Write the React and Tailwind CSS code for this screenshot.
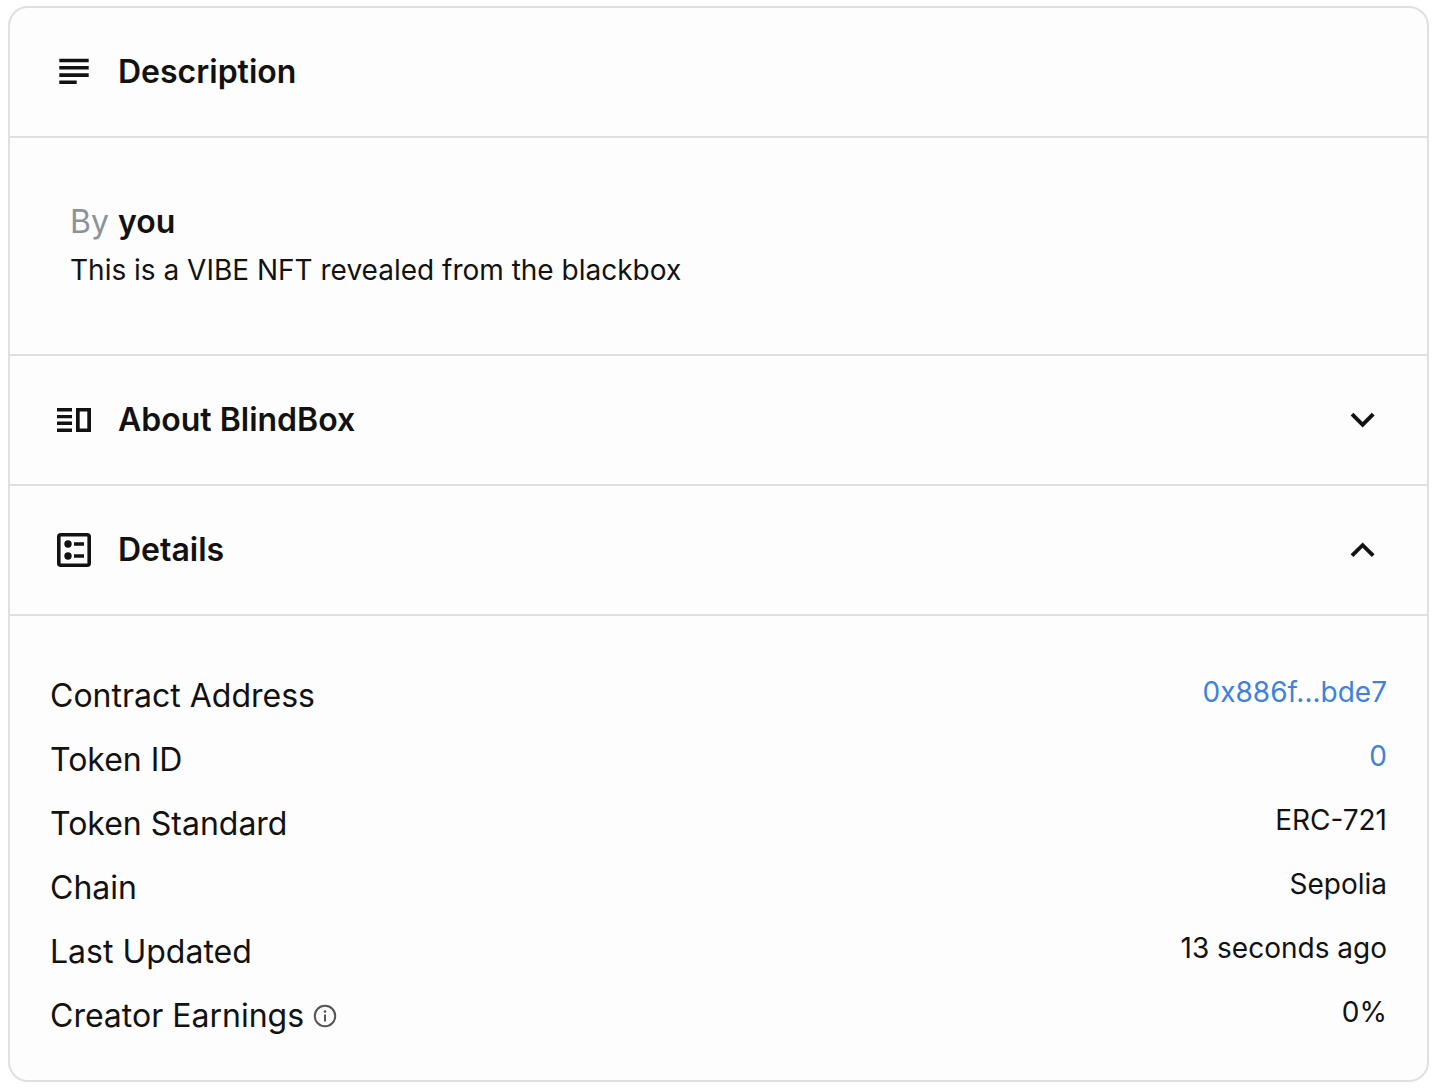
import { useState } from "react";

function SubjectIcon() {
  return (
    <svg className="size-12 shrink-0" viewBox="0 0 48 48" fill="currentColor" aria-hidden="true">
      <path d="M9.3 10.7h29.4v3.6H9.3zM9.3 18h29.4v3.6H9.3zM9.3 25.3h29.4v3.6H9.3zM9.3 32.4h17.4V36H9.3z" />
    </svg>
  );
}

function SplitIcon() {
  return (
    <svg className="size-12 shrink-0" viewBox="0 0 48 48" fill="currentColor" aria-hidden="true">
      <path d="M7 12h15v3.4H7zM7 18.9h15v3.4H7zM7 25.6h15V29H7zM7 32.6h15V36H7z" />
      <path fillRule="evenodd" d="M26 12h15v24H26zM29.7 15.6v16.8h7.6V15.6z" />
    </svg>
  );
}

function BallotIcon() {
  return (
    <svg className="size-12 shrink-0" viewBox="0 0 48 48" aria-hidden="true">
      <rect x="8.8" y="8.8" width="30.4" height="30.4" rx="2" fill="none" stroke="currentColor" strokeWidth="3.6" />
      <g fill="currentColor">
        <circle cx="18" cy="18" r="3.7" />
        <circle cx="18" cy="30" r="3.7" />
        <path d="M24 16.2h10v3.6H24zM24 28.2h10v3.6H24z" />
      </g>
    </svg>
  );
}

function Chevron({ open }) {
  return (
    <svg className="ml-auto size-12 shrink-0" viewBox="0 0 24 24" fill="currentColor" aria-hidden="true">
      <path
        d={
          open
            ? "M11.8 8.2l-6 5.9 1.4 1.4 4.6-4.6 4.6 4.6 1.4-1.4z"
            : "M16.4 8.4l-4.6 4.6-4.6-4.6-1.4 1.4 6 5.9 6-5.9z"
        }
      />
    </svg>
  );
}

function InfoIcon() {
  return (
    <svg className="size-6" viewBox="0 0 24 24" fill="none" stroke="currentColor" strokeWidth="2" role="img" aria-label="Info">
      <circle cx="12" cy="12" r="10.2" />
      <path d="M12 10.4v7" />
      <circle cx="12" cy="7.6" r="1.3" fill="currentColor" stroke="none" />
    </svg>
  );
}

function AccordionHeader({ icon, title, open, onToggle }) {
  return (
    <h2 className="border-b-2 border-[#e0e0e0]">
      <button type="button" aria-expanded={open} onClick={onToggle} className="flex h-32 w-full cursor-pointer items-center gap-5 px-10 text-left font-semibold">
        {icon}
        <span>{title}</span>
        <Chevron open={open} />
      </button>
    </h2>
  );
}

const details = [
  { label: "Contract Address", value: "0x886f...bde7", link: true },
  { label: "Token ID", value: "0", link: true },
  { label: "Token Standard", value: "ERC-721" },
  { label: "Chain", value: "Sepolia" },
  { label: "Last Updated", value: "13 seconds ago" },
  { label: "Creator Earnings", value: "0%", info: true },
];

export default function App() {
  const [aboutOpen, setAboutOpen] = useState(false);
  const [detailsOpen, setDetailsOpen] = useState(true);

  return (
    <main className="bg-white pt-1.5 pr-[5px] pb-1.5 pl-2 font-['Inter',sans-serif] text-[32px] leading-12 text-[#121212]">
      <div className="overflow-hidden rounded-[20px] border-2 border-[#e0e0e0] bg-[#fdfdfd]">
        <h2 className="flex h-[130px] items-center gap-5 border-b-2 border-[#e0e0e0] px-10 font-semibold">
          <SubjectIcon />
          <span>Description</span>
        </h2>
        <section className="border-b-2 border-[#e0e0e0] px-15 py-15">
          <p>
            <span className="text-[#8a939b]">By</span> <span className="font-semibold">you</span>
          </p>
          <p className="text-[28px]">This is a VIBE NFT revealed from the blackbox</p>
        </section>
        <AccordionHeader icon={<SplitIcon />} title="About BlindBox" open={aboutOpen} onToggle={() => setAboutOpen(!aboutOpen)} />
        <AccordionHeader icon={<BallotIcon />} title="Details" open={detailsOpen} onToggle={() => setDetailsOpen(!detailsOpen)} />
        {detailsOpen && (
          <dl className="p-10">
            {details.map((row) => (
              <div key={row.label} className="flex justify-between pt-4">
                <dt className="flex items-center gap-[9px]">
                  {row.label}
                  {row.info && (
                    <span className="text-[#555555]">
                      <InfoIcon />
                    </span>
                  )}
                </dt>
                <dd className="text-[28px] leading-10">
                  {row.link ? (
                    <a href="#" className="text-[#3e82dd]">{row.value}</a>
                  ) : (
                    row.value
                  )}
                </dd>
              </div>
            ))}
          </dl>
        )}
      </div>
    </main>
  );
}
